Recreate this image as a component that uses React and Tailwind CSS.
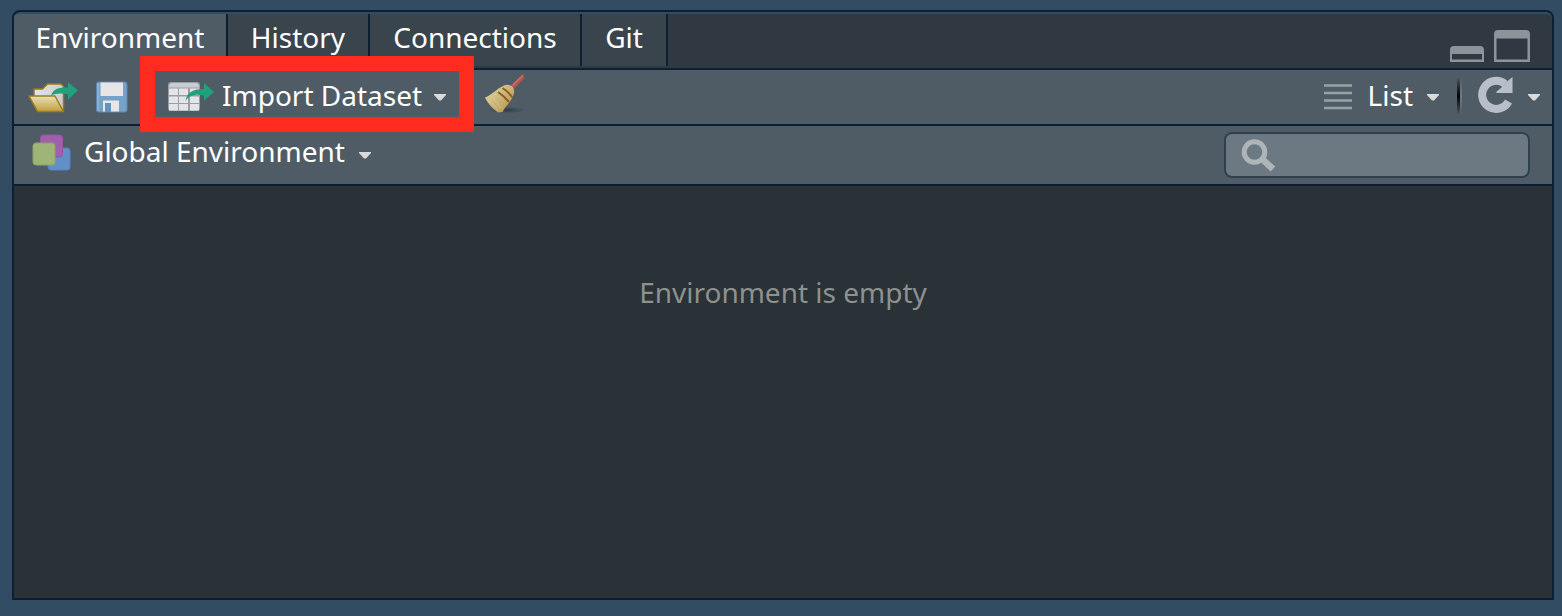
import React from "react";

function Caret() {
  return (
    <svg aria-hidden="true" width="12" height="7" viewBox="0 0 12 7" className="shrink-0">
      <path d="M0 0H12V1L7 6.500H5L0 1Z" fill="#dadada" />
    </svg>
  );
}

function OpenIcon() {
  return (
    <svg aria-hidden="true" width="50" height="32" viewBox="0 0 50 32" className="shrink-0">
      <defs>
        <linearGradient id="folder" x1="0" y1="0" x2="0" y2="1">
          <stop offset="0" stopColor="#e6e0bd" />
          <stop offset="1" stopColor="#c3a03a" />
        </linearGradient>
        <linearGradient id="paper" x1="0" y1="0" x2="1" y2="0">
          <stop offset="0" stopColor="#e4e4e4" />
          <stop offset="1" stopColor="#c9cccf" />
        </linearGradient>
      </defs>
      <path d="M6 15V8H14.500L19.500 3H33L35.500 5.500V28L33 29L10 20Z" fill="url(#paper)" stroke="#9a7b1c" strokeWidth="1.500" strokeLinejoin="round" />
      <path d="M1 15H27L35.500 30.500H9.500Z" fill="url(#folder)" stroke="#9f7d17" strokeWidth="1.500" strokeLinejoin="round" />
      <path d="M23 14.500C25 8.500 30 6 40 6.500V1L50 9.500L40 18.500V13.500C32 11.500 27 12.500 23 14.500Z" fill="#22a07c" />
    </svg>
  );
}

function SaveIcon() {
  return (
    <svg aria-hidden="true" width="32" height="32" viewBox="0 0 32 32" className="shrink-0">
      <rect x="0.500" y="1" width="30.500" height="30" rx="2" fill="#77a2c8" stroke="#5d87b2" />
      <rect x="1.500" y="2" width="1" height="28" fill="#9dbfdc" />
      <rect x="4.500" y="1.500" width="22.500" height="13.500" fill="#e6e6e6" />
      <path d="M7 19.500H23V30.500H15V22H9V30.500H7Z" fill="#e6e6e6" />
      <rect x="9" y="22" width="6" height="8.500" fill="#6591bd" />
    </svg>
  );
}

function DatasetIcon() {
  return (
    <svg aria-hidden="true" width="46" height="32" viewBox="0 0 46 32" className="shrink-0">
      <rect x="0" y="1" width="32" height="29" rx="3" fill="#9b9ca8" />
      <path d="M1 6Q1 2 4 2H28Q31 2 31 6V6.500H1Z" fill="#c9ccd0" />
      {[
        [1, 9],
        [11, 9],
        [22, 9],
      ].map(([x, w]) =>
        [7.5, 15.5, 23].map((y) => (
          <rect key={`${x}-${y}`} x={x} y={y} width={w} height="6.500" fill="#e3e4e8" />
        ))
      )}
      <path d="M17.500 20C19 11 25 8 36 8V2L46 11L36 19.500V14.500C27 12.500 21 14.500 17.500 20Z" fill="#22a07c" />
    </svg>
  );
}

function BroomIcon() {
  return (
    <svg aria-hidden="true" width="42" height="42" viewBox="0 0 42 42" className="shrink-0">
      <defs>
        <linearGradient id="straw" x1="0" y1="0.300" x2="0.800" y2="1">
          <stop offset="0" stopColor="#ddd3a0" />
          <stop offset="1" stopColor="#b8954b" />
        </linearGradient>
        <radialGradient id="shade">
          <stop offset="0" stopColor="#26323c" stopOpacity="0.750" />
          <stop offset="1" stopColor="#26323c" stopOpacity="0" />
        </radialGradient>
      </defs>
      <ellipse cx="23" cy="36" rx="18" ry="3.500" fill="url(#shade)" />
      <path d="M26.500 12L37.500 1Q39.500 -0.500 40 0.500V4.500L30 15Z" fill="#b3534c" />
      <path d="M28.500 11.500L38.500 1.800" stroke="#c77369" strokeWidth="1.500" />
      <path d="M1 23.500C8 21 12 15 20 11.500Q24 10 28 12Q31 15 30 19C29 26 22 31 18.500 38L14 38.500Q5 32 1 23.500Z" fill="url(#straw)" />
      <path d="M4 25L14 36M8 23L17 34" stroke="#eae0b4" strokeWidth="1" opacity="0.300" />
      <path d="M14 18Q20 22 25 28M18.500 14Q23.500 17 28.500 23.500" stroke="#8c5c22" strokeWidth="2" fill="none" />
    </svg>
  );
}

function EnvironmentIcon() {
  return (
    <svg aria-hidden="true" width="40" height="38" viewBox="0 0 40 38" className="shrink-0">
      <rect x="16" y="14" width="22" height="22" rx="3" fill="#638fc9" stroke="#5784bd" />
      <rect x="8.500" y="1" width="22" height="22" rx="3" fill="#a15fae" stroke="#9656a3" />
      <rect x="1" y="9" width="22" height="22" rx="3" fill="#9fb476" stroke="#8da663" />
    </svg>
  );
}

function ListIcon() {
  return (
    <svg aria-hidden="true" width="28" height="26" viewBox="0 0 28 26" className="shrink-0">
      <path d="M0 1.500H28M0 9H28M0 16.500H28M0 24H28" stroke="#9aa1a4" strokeWidth="2.400" />
    </svg>
  );
}

function RefreshIcon() {
  return (
    <svg aria-hidden="true" width="36" height="38" viewBox="0 0 36 38" className="shrink-0">
      <path d="M30.500 25.500A14 14 0 1 1 27 8" fill="none" stroke="#b8bfcb" strokeWidth="8" />
      <path d="M34.500 1V17H18.500V15.500L23 12L28.500 6Z" fill="#b8bfcb" />
    </svg>
  );
}

function MinimizeIcon() {
  return (
    <svg aria-hidden="true" width="34" height="16" viewBox="0 0 34 16">
      <path fillRule="evenodd" d="M0 16V4Q0 0 4 0H30Q34 0 34 4V16ZM2 8V13.500H32V8Z" fill="#8c9499" />
    </svg>
  );
}

function MaximizeIcon() {
  return (
    <svg aria-hidden="true" width="36" height="32" viewBox="0 0 36 32">
      <path fillRule="evenodd" d="M0 32V4Q0 0 4 0H32Q36 0 36 4V32ZM2.500 8.500V29.500H33.500V8.500Z" fill="#8c9499" />
    </svg>
  );
}

function SearchIcon() {
  return (
    <svg aria-hidden="true" width="36" height="34" viewBox="0 0 36 34" className="shrink-0">
      <circle cx="14.500" cy="14" r="10.300" fill="none" stroke="#aeb5b9" strokeWidth="5" />
      <path d="M22 21L33 31" stroke="#aeb5b9" strokeWidth="6.500" />
    </svg>
  );
}

const tabs = [
  { name: "Environment", style: "w-[214px] h-14 bg-[#4f5c66] rounded-tl-sm" },
  { name: "History", style: "w-[142px] h-[52px] bg-[#3a444c]" },
  { name: "Connections", style: "w-[212px] h-[52px] bg-[#3a444c]" },
  { name: "Git", style: "w-[86px] h-[52px] bg-[#3a444c]" },
];

export default function App() {
  return (
    <div className="flex min-h-screen flex-col bg-[#324c63] pt-2.5 pr-2 pb-4 pl-3 font-['Noto_Sans',sans-serif] text-[28px] leading-9 text-white">
      <main className="flex grow flex-col rounded-t-lg border-2 border-[#0d1f33]">
        <header className="mt-0.5 flex h-14 items-start justify-between rounded-t-md border-b-2 border-[#0d1f33] bg-[#303942]">
          <div role="tablist" className="flex items-start">
            {tabs.map((tab, i) => (
              <button
                key={tab.name}
                role="tab"
                aria-selected={i === 0}
                className={`${tab.style} flex items-start justify-center border-r-2 border-[#0d1f33] pt-[5px]`}
              >
                {tab.name}
              </button>
            ))}
          </div>
          <div className="flex h-12 items-end gap-2.5 pr-[22px]">
            <button aria-label="Minimize"><MinimizeIcon /></button>
            <button aria-label="Maximize"><MaximizeIcon /></button>
          </div>
        </header>
        <div className="flex h-14 items-center border-b-2 border-[#0d1f33] bg-[#4f5c66] pl-3.5">
          <button aria-label="Load workspace"><OpenIcon /></button>
          <button aria-label="Save workspace" className="ml-[18px]"><SaveIcon /></button>
          <button className="relative ml-10 flex items-center">
            <span className="absolute -inset-x-7 -top-[21px] -bottom-[15px] border-[15px] border-[#fe2b1e]" />
            <DatasetIcon />
            <span className="pb-1 pl-2">Import Dataset</span>
            <span className="pl-3"><Caret /></span>
          </button>
          <button aria-label="Clear objects" className="ml-[38px] pb-1"><BroomIcon /></button>
          <div className="ml-auto flex items-center pr-3">
            <button className="flex items-center">
              <ListIcon />
              <span className="pb-1 pl-4">List</span>
              <span className="pl-3.5"><Caret /></span>
            </button>
            <span className="ml-[18px] flex h-10 pb-0.5">
              <span className="w-[3px] bg-linear-to-b from-transparent via-black to-transparent" />
              <span className="w-0.5 bg-linear-to-b from-transparent via-[#6f7b86] to-transparent" />
            </span>
            <button aria-label="Refresh" className="ml-4 pb-1"><RefreshIcon /></button>
            <button aria-label="Refresh options" className="ml-3.5"><Caret /></button>
          </div>
        </div>
        <div className="flex h-[60px] items-center justify-between border-b-2 border-[#0d1f33] bg-[#4f5c66] pr-[22px] pl-[18px]">
          <button className="flex items-center pb-1">
            <EnvironmentIcon />
            <span className="pb-1 pl-3">Global Environment</span>
            <span className="pt-1 pl-3.5"><Caret /></span>
          </button>
          <label className="flex h-[46px] w-[306px] items-center rounded-lg border-2 border-[#2f4051] bg-[#6d7982] pl-3.5">
            <SearchIcon />
            <input type="search" aria-label="Search environment" className="min-w-0 grow bg-transparent outline-none" />
          </label>
        </div>
        <section className="grow bg-[#283237] pt-[88px] text-center text-[#8f9090]">
          Environment is empty
        </section>
      </main>
    </div>
  );
}
